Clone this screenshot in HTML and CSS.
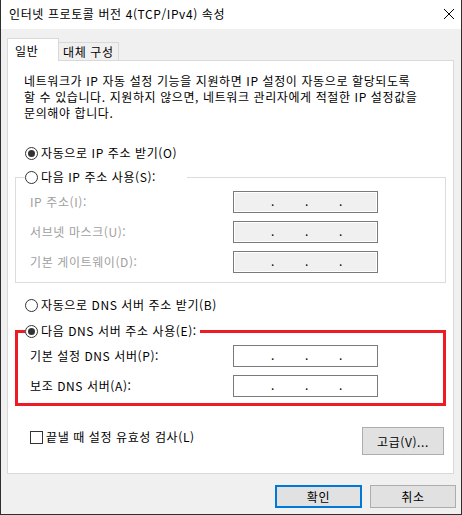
FILE: index.html
```html
<!DOCTYPE html>
<html lang="ko">
<head>
  <meta charset="UTF-8" />
  <title>인터넷 프로토콜 버전 4(TCP/IPv4) 속성</title>
  <link rel="stylesheet" href="styles.css">
</head>
<body>
  <div class="window">
    <div class="titlebar">
      <span class="title">인터넷 프로토콜 버전 4(TCP/IPv4) 속성</span>
      <svg class="close" width="12" height="12" viewBox="0 0 12 12">
        <path d="M1 1L11 11M11 1L1 11" stroke="#000" stroke-width="1" fill="none"/>
      </svg>
    </div>

    <div class="client">
      <div class="tabs">
        <div class="tab active">일반</div>
        <div class="tab">대체 구성</div>
      </div>

      <div class="panel">
        <p class="desc">네트워크가 IP 자동 설정 기능을 지원하면 IP 설정이 자동으로 할당되도록<br>할 수 있습니다. 지원하지 않으면, 네트워크 관리자에게 적절한 IP 설정값을<br>문의해야 합니다.</p>

        <div class="radio first"><span class="circle checked"></span>자동으로 IP 주소 받기(O)</div>

        <fieldset class="group">
          <legend class="wide"><div class="radio"><span class="circle"></span>다음 IP 주소 사용(S):</div></legend>
          <div class="row disabled">
            <span>IP 주소(I):</span>
            <div class="ip"><i>.</i><i>.</i><i>.</i></div>
          </div>
          <div class="row disabled">
            <span>서브넷 마스크(U):</span>
            <div class="ip"><i>.</i><i>.</i><i>.</i></div>
          </div>
          <div class="row disabled">
            <span>기본 게이트웨이(D):</span>
            <div class="ip"><i>.</i><i>.</i><i>.</i></div>
          </div>
        </fieldset>

        <div class="radio dns-auto"><span class="circle"></span>자동으로 DNS 서버 주소 받기(B)</div>

        <fieldset class="group marked">
          <legend><div class="radio"><span class="circle checked"></span>다음 DNS 서버 주소 사용(E):</div></legend>
          <div class="row">
            <span>기본 설정 DNS 서버(P):</span>
            <div class="ip"><i>.</i><i>.</i><i>.</i></div>
          </div>
          <div class="row">
            <span>보조 DNS 서버(A):</span>
            <div class="ip"><i>.</i><i>.</i><i>.</i></div>
          </div>
        </fieldset>

        <div class="bottom">
          <div class="check"><span class="box"></span>끝낼 때 설정 유효성 검사(L)</div>
          <button class="btn advanced">고급(V)...</button>
        </div>
      </div>

      <div class="footer">
        <button class="btn default">확인</button>
        <button class="btn">취소</button>
      </div>
    </div>
  </div>
</body>
</html>
```

FILE: styles.css
```css
* {
  box-sizing: border-box;
}
body {
  margin: 0;
  font-family: "Noto Sans CJK KR", "Noto Sans", sans-serif;
  font-size: 12px;
  line-height: 16px;
  letter-spacing: 0.6px;
  color: #000;
  background: #fff;
}
.window {
  width: 462px;
  height: 515px;
  border: 1px solid #2f2f2f;
  border-top: none;
  background: #f0f0f0;
  display: flex;
  flex-direction: column;
}
.titlebar {
  height: 29px;
  background: #fff;
  display: flex;
  align-items: center;
  justify-content: space-between;
  padding: 0 8px 1px 8px;
}
.close {
  margin-right: -2px;
}
.client {
  padding: 8px 0 0 6px;
}
.tabs {
  display: flex;
  align-items: flex-end;
  height: 23px;
}
.tab {
  height: 18px;
  padding: 0 4px;
  border: 1px solid #d9d9d9;
  border-bottom: none;
  background: #f0f0f0;
  line-height: 17px;
}
.tab.active {
  position: relative;
  z-index: 1;
  height: 23px;
  width: 52px;
  padding: 3px 7px 0 7px;
  margin-bottom: -1px;
  margin-right: -1px;
  background: #fff;
}
.panel {
  width: 447px;
  height: 414px;
  border: 1px solid #d9d9d9;
  background: #fff;
  padding: 12px 7px 0 7px;
}
.desc {
  margin: 0 0 0 9px;
}
.radio {
  display: flex;
  align-items: center;
  height: 16px;
}
.radio.first {
  margin: 24px 0 0 10px;
}
.circle {
  width: 13px;
  height: 13px;
  border: 1px solid #333;
  border-radius: 50%;
  margin-right: 3px;
  display: flex;
  align-items: center;
  justify-content: center;
  background: #fff;
}
.circle.checked::after {
  content: "";
  width: 7px;
  height: 7px;
  border-radius: 50%;
  background: #333;
}
.group {
  margin: 8px 0 0 0;
  padding: 6px 0 9px 9px;
  border: 1px solid #dcdcdc;
}
.group legend {
  padding: 0 3px 0 0;
  background: #fff;
}
.group legend.wide {
  padding-right: 31px;
}
.row {
  display: grid;
  grid-template-columns: 203px 145px;
  align-items: center;
  padding-left: 5px;
  height: 22px;
}
.row + .row {
  margin-top: 8px;
}
.row.disabled span {
  color: #a0a0a0;
}
.ip {
  height: 22px;
  border: 1px solid #7a7a7a;
  background: #fff;
  display: flex;
  gap: 31px;
  padding-left: 37px;
  line-height: 18px;
  letter-spacing: 0;
}
.ip i {
  font-style: normal;
  width: 3px;
}
.disabled .ip {
  background: #f0f0f0;
  box-shadow: inset 0 0 0 1px #fff;
}
.radio.dns-auto {
  margin: 14px 0 0 10px;
}
.group.marked {
  margin-top: 10px;
  padding: 6px 0 6px 7px;
  border: 3px solid #ed1c24;
}
.bottom {
  display: flex;
  justify-content: space-between;
  align-items: flex-start;
  margin-top: 21px;
}
.check {
  display: flex;
  align-items: center;
  margin: 2px 0 0 15px;
}
.box {
  width: 13px;
  height: 13px;
  border: 1px solid #333;
  background: #fff;
  margin-right: 3px;
}
.btn {
  font-family: inherit;
  font-size: 12px;
  letter-spacing: 0.6px;
  color: #000;
  background: #e1e1e1;
  border: 1px solid #adadad;
  height: 23px;
  width: 86px;
  padding: 0;
}
.advanced {
  width: 82px;
  height: 28px;
  margin-right: 2px;
}
.footer {
  display: flex;
  justify-content: flex-end;
  gap: 8px;
  margin: 11px 5px 0 0;
}
.btn.default {
  width: 87px;
  border: 2px solid #0078d7;
}
```
